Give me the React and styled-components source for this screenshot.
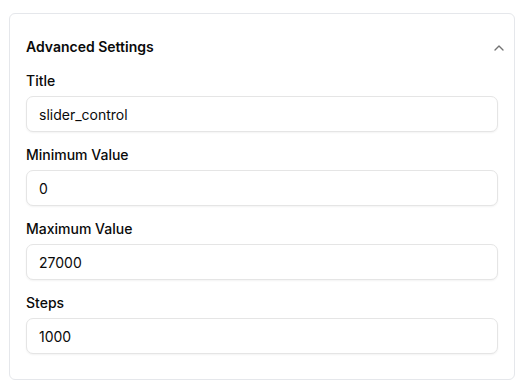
import React, { useState } from "react";
import styled, { createGlobalStyle } from "styled-components";
import { ChevronUp } from "lucide-react";

const GlobalStyle = createGlobalStyle`
  body {
    margin: 0;
    background: #ffffff;
    font-family: Inter, "Noto Sans", sans-serif;
    color: #0a0a0a;
  }
`;

const Page = styled.div`
  padding: 13px 14px 10px 9px;
`;

const Card = styled.section`
  border: 1px solid #e5e7eb;
  border-radius: 6px;
  padding: 23px 16px 25px 16px;
  background: #fff;
`;

const Header = styled.button`
  display: flex;
  align-items: center;
  justify-content: space-between;
  width: 100%;
  padding: 0;
  margin: 0 0 17px 0;
  border: none;
  background: none;
  font-family: inherit;
  font-size: 14px;
  line-height: 20px;
  font-weight: 600;
  color: #0a0a0a;
  cursor: pointer;
  text-align: left;

  svg {
    color: #737373;
    margin-right: -9px;
    margin-top: 2px;
  }
`;

const Fields = styled.div`
  display: flex;
  flex-direction: column;
  gap: 16px;
`;

const Field = styled.div`
  display: flex;
  flex-direction: column;
  gap: 8px;
`;

const Label = styled.label`
  font-size: 14px;
  line-height: 14px;
  font-weight: 500;
  color: #0a0a0a;
`;

const Input = styled.input`
  box-sizing: border-box;
  height: 36px;
  width: 100%;
  padding: 0 12px;
  border: 1px solid #e5e5e5;
  border-radius: 7px;
  box-shadow: 0 1px 2px rgba(0, 0, 0, 0.05);
  font-family: inherit;
  font-size: 14px;
  color: #0a0a0a;
  background: #fff;
  outline: none;
`;

const fields = [
  { id: "title", label: "Title", value: "slider_control" },
  { id: "min", label: "Minimum Value", value: "0" },
  { id: "max", label: "Maximum Value", value: "27000" },
  { id: "steps", label: "Steps", value: "1000" },
];

export default function App() {
  const [open, setOpen] = useState(true);
  const [values, setValues] = useState(
    Object.fromEntries(fields.map((f) => [f.id, f.value]))
  );

  return (
    <Page>
      <GlobalStyle />
      <Card>
        <Header onClick={() => setOpen(!open)}>
          Advanced Settings
          <ChevronUp size={16} strokeWidth={2} />
        </Header>
        {open && (
          <Fields>
            {fields.map((f) => (
              <Field key={f.id}>
                <Label htmlFor={f.id}>{f.label}</Label>
                <Input
                  id={f.id}
                  value={values[f.id]}
                  onChange={(e) => setValues({ ...values, [f.id]: e.target.value })}
                />
              </Field>
            ))}
          </Fields>
        )}
      </Card>
    </Page>
  );
}
